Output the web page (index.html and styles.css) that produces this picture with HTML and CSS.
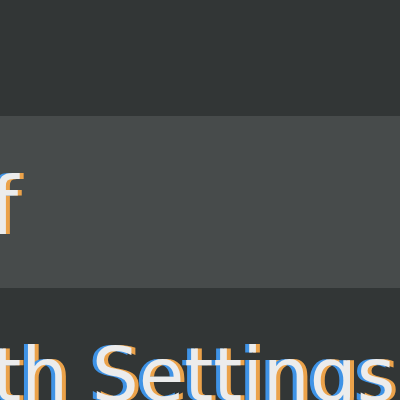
FILE: index.html
```html
<!DOCTYPE html>
<html>
<head>
    <title>Bluetooth Menu</title>
    <link rel="stylesheet" href="styles.css">
</head>
<body>
    <div id="menu">
        <div class="gap"></div>
        <div class="item selected">
            <span class="label off">Off</span>
        </div>
        <div class="item">
            <span class="label settings">Bluetooth Settings</span>
        </div>
    </div>
</body>
</html>
```
FILE: styles.css
```css
/* zoomed-in indicator menu */
body {
    margin: 0;
    background-color: #323636;
    font-family: "DejaVu Sans", sans-serif;
    overflow: hidden;
}

#menu {
    width: 400px;
    height: 400px;
    overflow: hidden;
    display: flex;
    flex-direction: column;
}

.gap {
    height: 116px;
    flex-shrink: 0;
}

.item {
    display: flex;
    align-items: center;
    flex-shrink: 0;
    white-space: nowrap;
}

.item.selected {
    height: 172px;
    background-color: #474b4b;
}

.label {
    font-size: 80px;
    color: #ececec;
    text-shadow: -4px 0 #3f93e6, 4px 0 #eba24a;
}

.off {
    margin-left: -100px;
    margin-top: 8px;
}

.settings {
    margin-top: 44px;
    font-size: 74px;
    margin-left: -291px;
}
```
